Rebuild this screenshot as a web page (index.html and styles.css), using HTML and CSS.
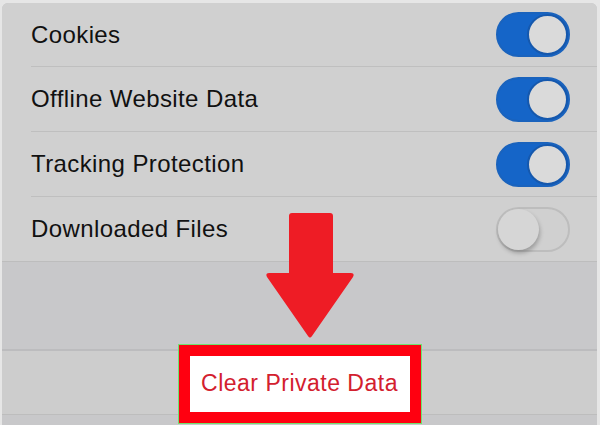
FILE: index.html
```html
<!DOCTYPE html>
<html lang="en">
<head>
    <meta charset="UTF-8">
    <title>Clear Private Data</title>
    <link rel="stylesheet" href="styles.css">
</head>
<body>
<div class="screen">
    <ul class="list">
        <li class="row">
            <span class="label">Cookies</span>
            <span class="toggle on"><i></i></span>
        </li>
        <li class="row">
            <span class="label">Offline Website Data</span>
            <span class="toggle on"><i></i></span>
        </li>
        <li class="row">
            <span class="label">Tracking Protection</span>
            <span class="toggle on"><i></i></span>
        </li>
        <li class="row last">
            <span class="label">Downloaded Files</span>
            <span class="toggle"><i></i></span>
        </li>
    </ul>
    <div class="gap"></div>
    <div class="action">
        <span class="clear">Clear Private Data</span>
    </div>
    <div class="foot"></div>

    <svg class="arrow" width="90" height="126" viewBox="0 0 90 126">
        <path d="M24 3 Q24 0 27 0 L65 0 Q68 0 68 3 L68 60 L86 60 Q90 60 88 64 L47 123 Q45 126 43 123 L2 64 Q0 60 4 60 L24 60 Z" fill="#ee1c25"/>
    </svg>
</div>
</body>
</html>
```

FILE: styles.css
```css
*{
    padding:0px;
    margin:0px;
    list-style: none;
    box-sizing: border-box;
}
body{
    background-color: #e6e6e6;
    font-family: "Liberation Sans", Arial, sans-serif;
    width:600px;
    height:425px;
    overflow: hidden;
}
.screen{
    position: relative;
    margin:3px 3px 0px 2px;
    height:422px;
    border-radius: 6px 6px 0px 0px;
    background-color: #c8c8ca;
}
.list{
    background-color: #d0d0d0;
    border-radius: 6px 6px 0px 0px;
}
.row{
    display: flex;
    align-items: center;
    justify-content: space-between;
    height:65px;
    margin-left:29px;
    padding-right:27px;
    border-bottom:1px solid #bfbfbf;
}
.row.last{
    margin-left:0px;
    padding-left:29px;
    border-bottom:1px solid #bdbdbd;
}
.row:first-child{
    height:64px;
}
.label{
    font-size:24px;
    letter-spacing: 0.4px;
    color:#111;
}
.toggle{
    position: relative;
    width:74px;
    height:45px;
    border-radius: 23px;
    border:2px solid #bdbdbd;
    background-color: #d0d0d0;
}
.toggle i{
    position: absolute;
    left:0px;
    top:0px;
    width:41px;
    height:41px;
    border-radius: 50%;
    background-color: #d6d6d6;
    box-shadow: 1px 3px 4px rgba(0,0,0,0.25);
}
.toggle.on{
    border-color: #1a63bd;
    background-color: #1565c8;
}
.toggle.on i{
    left:auto;
    right:0px;
    background-color: #dadada;
    border:2px solid #1558ad;
    box-shadow: none;
}
.gap{
    height:89px;
    border-bottom:2px solid #bcbcbe;
}
.action{
    display: flex;
    align-items: center;
    justify-content: center;
    height:64px;
    background-color: #cdcdcd;
    border-bottom:1px solid #bdbdbd;
}
.clear{
    position: relative;
    z-index: 1;
    display: flex;
    align-items: center;
    justify-content: center;
    width:242px;
    height:78px;
    margin-top:2px;
    border:11px solid #ff0010;
    background-color: #fff;
    outline:1px solid #6fe36f;
    color:#d3202e;
    font-size:23px;
    letter-spacing: 0.5px;
}
.foot{
    height:5px;
}
.arrow{
    position: absolute;
    left:263px;
    top:210px;
}
```
